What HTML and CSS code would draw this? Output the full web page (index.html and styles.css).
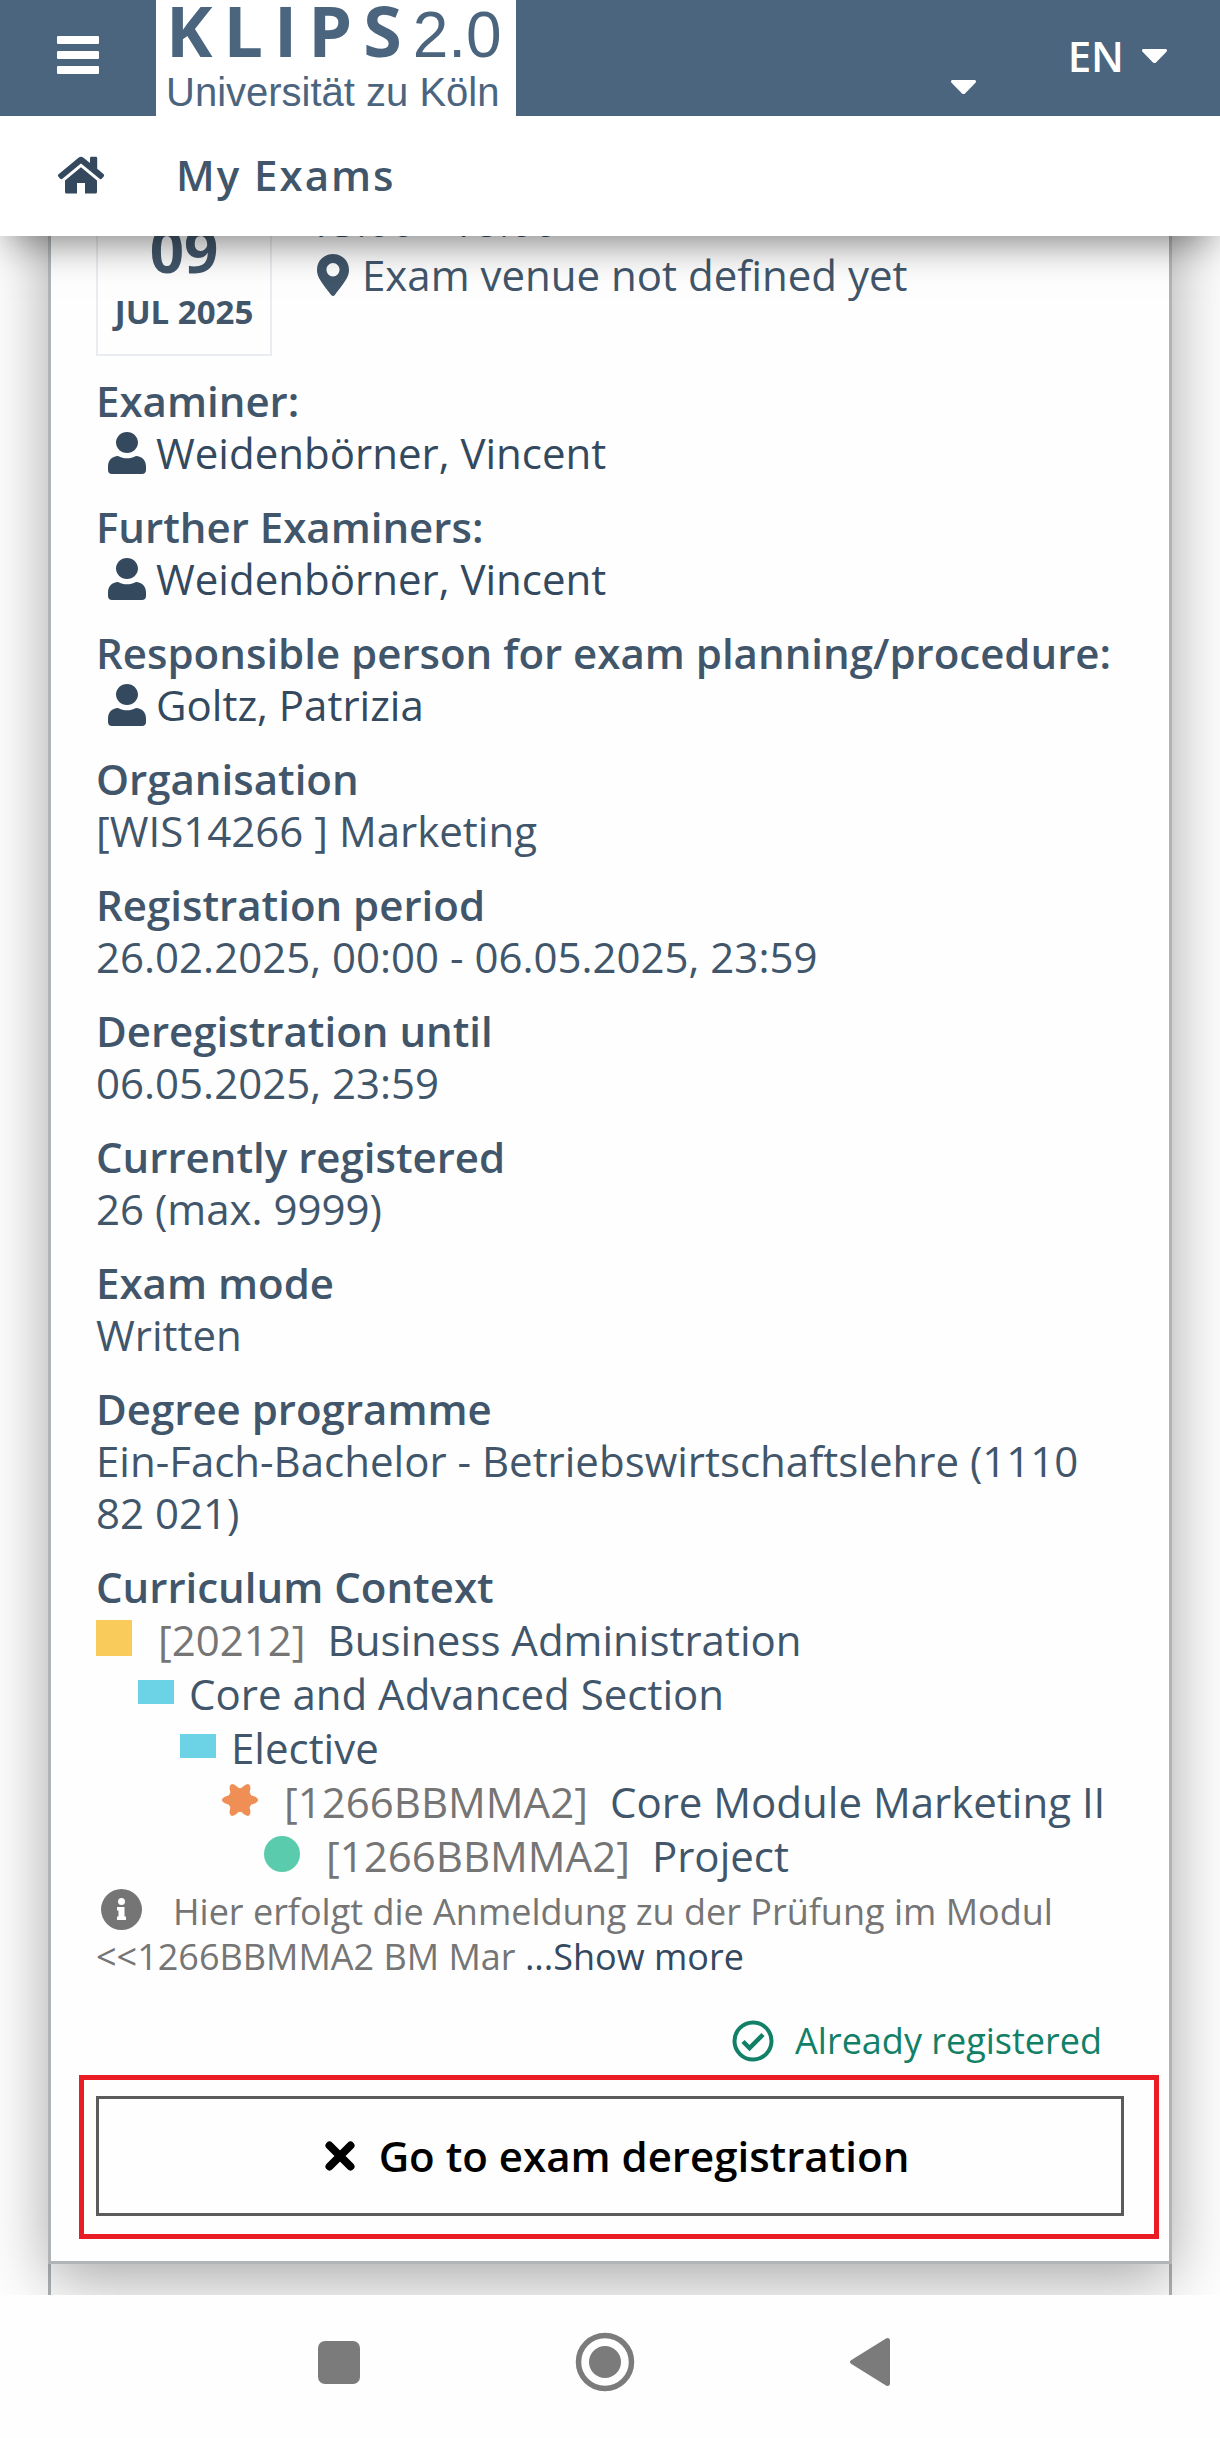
FILE: index.html
```html
<!DOCTYPE html>
<html lang="en">
<head>
<meta charset="utf-8">
<meta name="viewport" content="width=device-width, initial-scale=1">
<title>My Exams</title>
<link rel="stylesheet" href="styles.css">
</head>
<body>
<svg class="sprite" aria-hidden="true">
  <symbol id="user" viewBox="0 0 38 42"><path d="M19 0c6 0 11 4.700 11 10.500S25 21 19 21 8 16.300 8 10.500 13 0 19 0zM10 24c3 1.700 5.800 2.300 9 2.300s6-.6 9-2.300c6 .3 10 4.500 10 10.500V38c0 2.500-1.500 4-4 4H4c-2.500 0-4-1.500-4-4v-3.500C0 28.500 4 24.300 10 24z"/></symbol>
  <symbol id="caret" viewBox="0 0 25 14"><path d="M1.500 0h22c1.400 0 2 1.600 1 2.700L14 13.400c-.9.800-2.100.8-3 0L.5 2.700C-.5 1.600.1 0 1.500 0z"/></symbol>
</svg>
<header class="top">
  <div class="bar">
    <button class="icon-btn menu" aria-label="Menu"><svg width="42" height="38" viewBox="0 0 42 38"><rect width="42" height="8" rx="1"/><rect y="15" width="42" height="8" rx="1"/><rect y="30" width="42" height="8" rx="1"/></svg></button>
    <a class="logo" href="#"><span class="logo-name"><b>KLIPS</b><span>2.0</span></span><span class="logo-sub">Universität zu Köln</span></a>
    <button class="icon-btn account" aria-label="Account"><svg width="25" height="14"><use href="#caret"/></svg></button>
    <button class="icon-btn lang">EN<svg width="25" height="14"><use href="#caret"/></svg></button>
  </div>
  <nav class="crumbs">
    <a href="#" aria-label="Home"><svg width="48" height="38" viewBox="0 0 48 38"><path d="M1.600 18.200 21.500 1.700c1.600-1.300 3.400-1.300 5 0L33 7V2.200C33 1.400 33.600.8 34.400.8h4.400c.8 0 1.400.6 1.400 1.400v10.600l6.200 5.300c.9.800 1 1.600.3 2.400l-1.700 2c-.7.900-1.600.9-2.400.2L25 8.300c-.7-.6-1.300-.6-2 0L5.400 22.700c-.9.700-1.700.7-2.400-.2l-1.700-2c-.6-.8-.6-1.600.3-2.300z"/><path d="M24 11.300 40 24.500V36c0 .9-.6 1.500-1.500 1.500H28V27h-8v10.500H9.500C8.600 37.500 8 36.900 8 36V24.500z"/></svg></a>
    <h1>My Exams</h1>
  </nav>
</header>
<main>
  <article class="card">
    <div class="appointment">
      <time class="date" datetime="2025-07-09"><span class="day">09</span><span class="month">JUL 2025</span></time>
      <div class="where">
        <span class="time">13:00 - 18:00</span>
        <span class="venue"><svg width="32" height="42" viewBox="0 0 32 42"><path fill-rule="evenodd" d="M16 0c9 0 16 6.900 16 15.700 0 7-3.500 11.300-14.200 25.400-.9 1.200-2.700 1.200-3.600 0C3.500 27 0 22.700 0 15.700 0 6.900 7 0 16 0zm0 9c-3.600 0-6.500 3-6.500 6.700s2.900 6.700 6.500 6.700 6.500-3 6.500-6.700S19.600 9 16 9z"/></svg>Exam venue not defined yet</span>
      </div>
    </div>
    <dl class="facts">
      <div><dt>Examiner:</dt><dd><a class="person" href="#"><svg width="38" height="42"><use href="#user"/></svg>Weidenbörner, Vincent</a></dd></div>
      <div><dt>Further Examiners:</dt><dd><a class="person" href="#"><svg width="38" height="42"><use href="#user"/></svg>Weidenbörner, Vincent</a></dd></div>
      <div><dt>Responsible person for exam planning/procedure:</dt><dd><a class="person" href="#"><svg width="38" height="42"><use href="#user"/></svg>Goltz, Patrizia</a></dd></div>
      <div><dt>Organisation</dt><dd>[WIS14266 ] Marketing</dd></div>
      <div><dt>Registration period</dt><dd>26.02.2025, 00:00 - 06.05.2025, 23:59</dd></div>
      <div><dt>Deregistration until</dt><dd>06.05.2025, 23:59</dd></div>
      <div><dt>Currently registered</dt><dd>26 (max. 9999)</dd></div>
      <div><dt>Exam mode</dt><dd>Written</dd></div>
      <div><dt>Degree programme</dt><dd>Ein-Fach-Bachelor - Betriebswirtschaftslehre (1110 82 021)</dd></div>
      <div><dt>Curriculum Context</dt>
        <dd><ul class="tree">
          <li class="l0"><i class="mark program"></i><span class="code">[20212]</span>Business Administration</li>
          <li class="l1"><i class="mark group"></i>Core and Advanced Section</li>
          <li class="l2"><i class="mark group"></i>Elective</li>
          <li class="l3"><svg class="mark module" viewBox="0 0 36 36"><ellipse cx="18" cy="18" rx="18" ry="6"/><ellipse cx="18" cy="18" rx="18" ry="6" transform="rotate(60 18 18)"/><ellipse cx="18" cy="18" rx="18" ry="6" transform="rotate(120 18 18)"/><circle cx="18" cy="18" r="12"/></svg><span class="code">[1266BBMMA2]</span>Core Module Marketing II</li>
          <li class="l4"><i class="mark exam"></i><span class="code">[1266BBMMA2]</span>Project</li>
        </ul></dd></div>
    </dl>
    <p class="note"><svg width="41" height="41" viewBox="0 0 41 41"><circle cx="20.500" cy="20.500" r="20.500" fill="#757575"/><circle cx="20.500" cy="12.500" r="3.500" fill="#fff"/><path d="M16 18h7.500v9.500H25V31h-9v-3.500h1.500v-6H16z" fill="#fff"/></svg>Hier erfolgt die Anmeldung zu der Prüfung im Modul &lt;&lt;1266BBMMA2 BM Mar <a href="#">...Show more</a></p>
    <p class="status"><svg class="outline" width="42" height="42" viewBox="0 0 42 42"><circle cx="21" cy="21" r="18.500" stroke-width="4"/><path d="m11 21.500 6.500 6.500L31 14.500" stroke-width="4.500"/></svg>Already registered</p>
    <div class="highlight"><button class="action"><svg class="outline" width="30" height="30" viewBox="0 0 30 30" stroke-width="8" stroke-linecap="round"><path d="m4.500 4.500 21 21m0-21-21 21"/></svg>Go to exam deregistration</button></div>
  </article>
  <article class="card-next"></article>
</main>
<nav class="system">
  <button class="icon-btn" aria-label="Recent apps"><svg width="42" height="43"><rect width="42" height="43" rx="7"/></svg></button>
  <button class="icon-btn" aria-label="Home screen"><svg width="60" height="60" viewBox="0 0 60 60"><circle cx="30" cy="30" r="26.500" fill="none" stroke="#7b7b7b" stroke-width="5.500"/><circle cx="30" cy="30" r="16"/></svg></button>
  <button class="icon-btn" aria-label="Back"><svg width="40" height="48" viewBox="0 0 40 48"><path d="M1 22.300 36 .6c2-1.200 4-.3 4 2v42.800c0 2.300-2 3.200-4 2L1 25.700c-1.300-.9-1.300-2.500 0-3.400z"/></svg></button>
</nav>
</body>
</html>
```
FILE: styles.css
```css
* { box-sizing: border-box; }

body {
  margin: 0;
  background: #fefefe;
  color: #41566a;
  font: 42px/52px "Open Sans", "Noto Sans", sans-serif;
}

h1, p, dl, dd, ul { margin: 0; padding: 0; }
a { color: #34495e; text-decoration: none; }
svg { flex: none; fill: currentColor; }
.outline { fill: none; stroke: currentColor; }
.sprite { position: absolute; width: 0; height: 0; }

.icon-btn {
  display: flex;
  align-items: center;
  padding: 0;
  border: 0;
  background: none;
  color: inherit;
  font: inherit;
}

/* Header */
.top {
  position: relative;
  z-index: 2;
  background: #fff;
  box-shadow: 0 16px 38px -10px rgba(0, 0, 0, 0.5);
}
.bar {
  display: flex;
  height: 116px;
  background: #4b657f;
  color: #fff;
}
.menu { width: 156px; padding: 0 0 6px 57px; }
.logo {
  display: flex;
  flex-direction: column;
  width: 360px;
  padding-left: 10px;
  background: #fff;
  color: #4b657f;
}
.logo-name {
  display: flex;
  align-items: baseline;
  height: 68px;
  font-size: 70px;
  line-height: 60px;
}
.logo-name b { letter-spacing: 11px; }
.logo-name span { font-family: "Liberation Sans", sans-serif; font-size: 64px; }
.logo-sub { font: 40px/48px "Liberation Sans", sans-serif; }
.account { margin-left: auto; padding-top: 58px; }
.lang { gap: 18px; margin: 0 53px 4px 92px; font-weight: 600; }
.crumbs {
  display: flex;
  align-items: center;
  gap: 71px;
  height: 120px;
  padding: 0 0 2px 57px;
}
.crumbs a { display: flex; }
.crumbs h1 {
  color: #41566a;
  font-size: 42px;
  font-weight: 600;
  letter-spacing: 2px;
}

/* Exam card; the list is scrolled partly under the header */
main { overflow: hidden; }
.card {
  position: relative;
  z-index: 1;
  margin: -60px 48px 0;
  padding: 16px 45px 22px;
  border: 3px solid #b0b4b6;
  background: #fefefe;
  box-shadow: 0 15px 60px rgba(0, 0, 0, 0.35);
}
.card-next {
  height: 31px;
  margin: 0 48px;
  border: solid #b0b4b6;
  border-width: 0 3px;
}
.appointment { display: flex; gap: 36px; }
.date {
  display: flex;
  flex-direction: column;
  width: 176px;
  padding: 17px 0 16px;
  border: 2px solid #e9edf1;
  font-weight: 700;
  text-align: center;
}
.day { font-size: 60px; line-height: 72px; }
.month { font-size: 33px; }
.where { display: flex; flex-direction: column; gap: 2px; }
.time { color: #34495e; }
.venue { display: flex; align-items: center; gap: 13px; padding-left: 9px; }

.facts {
  display: flex;
  flex-direction: column;
  gap: 22px;
  margin-top: 19px;
}
dt { font-weight: 600; }
.person { display: flex; align-items: center; gap: 10px; padding-left: 12px; }

.tree { line-height: 54px; list-style: none; }
.tree li { display: flex; align-items: center; gap: 15px; white-space: nowrap; }
.l1 { padding-left: 42px; }
.l2 { padding-left: 84px; }
.l3 { padding-left: 126px; }
.l4 { padding-left: 168px; }
.mark { width: 36px; height: 36px; margin-bottom: 5px; }
.program { background: #f9cb5a; }
.group { height: 24px; background: #6cd3e6; }
.module { color: #ef8f55; }
.exam { border-radius: 50%; background: #5accad; }
.code { padding: 0 7px 0 11px; color: #757575; }

.note, .status { font-size: 36px; line-height: 45px; }
.note { margin-top: 6px; color: #757575; }
.note svg { margin: 0 31px 0 5px; vertical-align: -5px; }
.status {
  display: flex;
  align-items: center;
  justify-content: flex-end;
  gap: 21px;
  margin-top: 39px;
  padding-right: 22px;
  color: #118066;
}
.highlight {
  margin: 12px -35px 0 -17px;
  padding: 16px 30px 18px 12px;
  border: 5px solid #ea1c24;
}
.action {
  display: flex;
  align-items: center;
  justify-content: center;
  gap: 24px;
  width: 100%;
  height: 120px;
  padding-left: 20px;
  border: 3px solid #5b5b5b;
  background: #fefefe;
  color: #000;
  font: 600 42px/52px "Open Sans", "Noto Sans", sans-serif;
}

/* System navigation */
.system {
  display: flex;
  align-items: center;
  justify-content: center;
  gap: 215px;
  height: 142px;
  padding: 0 12px 8px 0;
  background: #fefefe;
  color: #7b7b7b;
}
```
